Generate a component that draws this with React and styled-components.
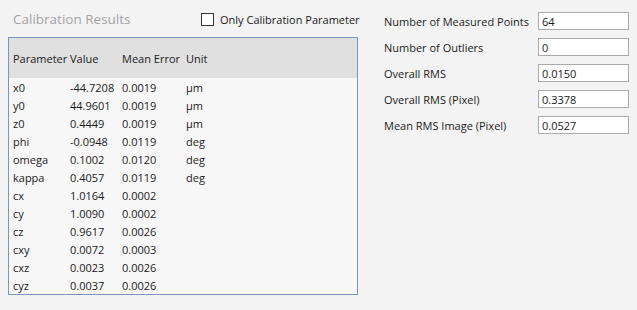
import { useState } from "react";
import styled, { createGlobalStyle } from "styled-components";

const GlobalStyle = createGlobalStyle`
    body {
        margin: 0;
        background: #f3f3f3;
        font-family: "Open Sans", "Noto Sans", sans-serif;
        font-size: 11px;
        color: #1b1b1b;
    }
`
const StylePage = styled.div`
    display: grid;
    grid-template-columns: 350px 246px;
    column-gap: 26px;
    padding-left: 8px;
    width: 637px;
    height: 310px;
    box-sizing: border-box;
`
const StyleTitleRow = styled.div`
    display: grid;
    grid-template-columns: 188px auto;
    align-items: center;
    height: 37px;
    padding-left: 5px;
    padding-top: 1px;
    box-sizing: border-box;
    h2 {
        margin: 0;
        font-size: 13.5px;
        font-weight: normal;
        color: #a3a3a3;
    }
`
const StyleCheck = styled.label`
    display: flex;
    align-items: center;
    gap: 6px;
    white-space: nowrap;
    cursor: pointer;
    span.box {
        width: 11px;
        height: 11px;
        border: 1px solid #333333;
        background: #ffffff;
        display: grid;
        place-items: center;
        font-size: 10px;
        line-height: 1;
    }
`
const StyleTable = styled.div`
    border: 1px solid #7a96bd;
    background: #f7f7f7;
    height: 258px;
    box-sizing: border-box;
`
const StyleRow = styled.div`
    display: grid;
    grid-template-columns: 57px 52px 64px 1fr;
    align-items: center;
    padding-left: 4px;
    height: ${props => props.$head ? "40px" : "18px"};
    background: ${props => props.$head ? "#e0e0e0" : "transparent"};
    span {
        white-space: nowrap;
    }
`
const StyleSide = styled.div`
    display: grid;
    grid-template-columns: 154px 91px;
    grid-auto-rows: 18px;
    row-gap: 8px;
    align-items: center;
    padding-top: 12px;
    label {
        white-space: nowrap;
    }
    input {
        width: 100%;
        height: 18px;
        box-sizing: border-box;
        border: 1px solid #ababab;
        background: #ffffff;
        padding: 0 3px;
        font-family: inherit;
        font-size: 11px;
        color: #1b1b1b;
        outline: none;
    }
`

const rows = [
    ["x0", "-44.7208", "0.0019", "µm"],
    ["y0", "44.9601", "0.0019", "µm"],
    ["z0", "0.4449", "0.0019", "µm"],
    ["phi", "-0.0948", "0.0119", "deg"],
    ["omega", "0.1002", "0.0120", "deg"],
    ["kappa", "0.4057", "0.0119", "deg"],
    ["cx", "1.0164", "0.0002", ""],
    ["cy", "1.0090", "0.0002", ""],
    ["cz", "0.9617", "0.0026", ""],
    ["cxy", "0.0072", "0.0003", ""],
    ["cxz", "0.0023", "0.0026", ""],
    ["cyz", "0.0037", "0.0026", ""],
]

const stats = [
    ["Number of Measured Points", "64"],
    ["Number of Outliers", "0"],
    ["Overall RMS", "0.0150"],
    ["Overall RMS (Pixel)", "0.3378"],
    ["Mean RMS Image (Pixel)", "0.0527"],
]

function App() {
    const [onlyCalib, setOnlyCalib] = useState(false);

    return (
      <StylePage>
        <GlobalStyle />
        <div>
            <StyleTitleRow>
                <h2>Calibration Results</h2>
                <StyleCheck onClick={() => setOnlyCalib(v => !v)}>
                    <span className="box">{onlyCalib ? "✓" : ""}</span>
                    Only Calibration Parameter
                </StyleCheck>
            </StyleTitleRow>
            <StyleTable>
                <StyleRow $head>
                    <span>Parameter</span>
                    <span>Value</span>
                    <span>Mean Error</span>
                    <span>Unit</span>
                </StyleRow>
                {rows.map(r => (
                    <StyleRow key={r[0]}>
                        {r.map((c, i) => <span key={i}>{c}</span>)}
                    </StyleRow>
                ))}
            </StyleTable>
        </div>
        <StyleSide>
            {stats.map(s => [
                <label key={s[0] + "l"}>{s[0]}</label>,
                <input key={s[0] + "i"} defaultValue={s[1]} />
            ])}
        </StyleSide>
      </StylePage>
    )
}

export default App
